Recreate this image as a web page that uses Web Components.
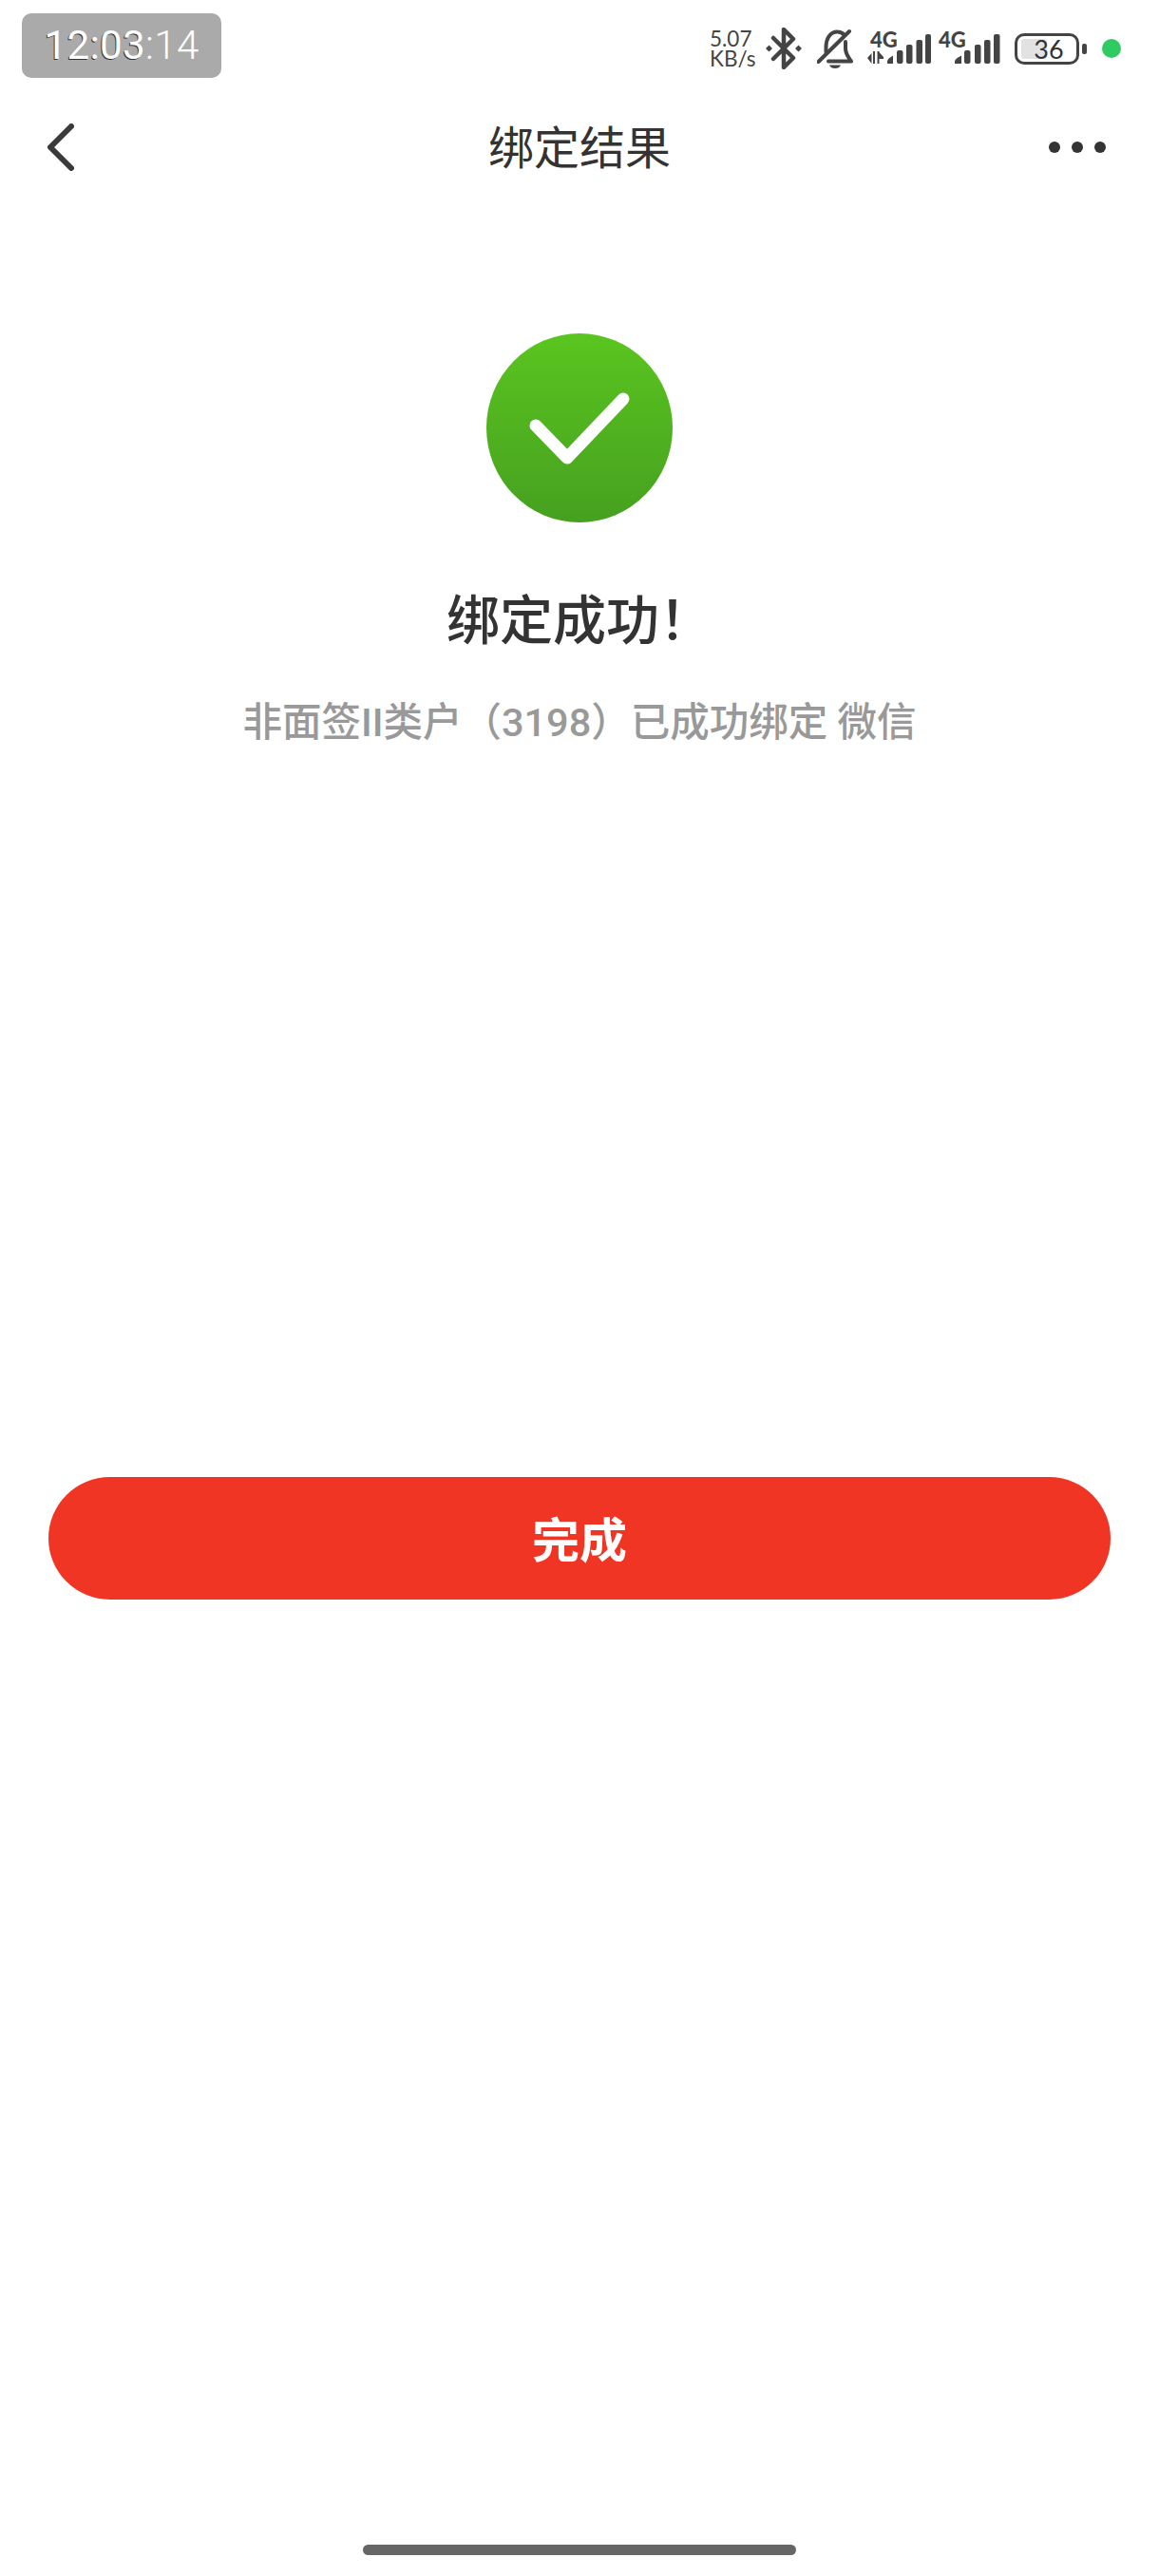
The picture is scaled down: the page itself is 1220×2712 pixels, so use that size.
<!DOCTYPE html>
<html lang="zh-CN">
<head>
<meta charset="utf-8">
<title>绑定结果</title>
<style>
html,body{margin:0;padding:0;background:#fff}
body{font-family:Roboto,"Noto Sans CJK SC",sans-serif}
app-page{display:flex;flex-direction:column;width:1220px;height:2712px}
</style>
</head>
<body>
<app-page>
  <status-bar></status-bar>
  <nav-bar>绑定结果</nav-bar>
  <result-panel heading="绑定成功！">非面签II类户（3198）已成功绑定 微信</result-panel>
  <primary-button>完成</primary-button>
  <home-bar></home-bar>
</app-page>

<script>
function make(name, html){
  customElements.define(name, class extends HTMLElement{
    constructor(){
      super();
      this.attachShadow({mode:'open'}).innerHTML = html;
    }
    connectedCallback(){
      const h=this.getAttribute('heading'), el=this.shadowRoot.querySelector('[data-heading]');
      if(h&&el) el.textContent=h;
    }
  });
}

make('status-bar', `
<style>
:host{display:flex;align-items:flex-start;justify-content:space-between;box-sizing:border-box;height:100px;padding:14px 40px 0 23px;color:#444;flex:none}
.clock{box-sizing:border-box;width:210px;height:68px;border-radius:10px;background:#aaa;color:#fff;display:flex;align-items:center;justify-content:center;
  font:300 42px/1 Roboto,sans-serif;letter-spacing:.4px}
.clock b{font-weight:400;text-shadow:-1px 1px 0 #333}
.icons{display:flex;align-items:center;height:44px;margin-top:15px}
.speed{font:400 22.500px/21px Lato,sans-serif;width:47px;margin-left:-2px;margin-right:12px;text-align:left;color:#444}
.speed span{display:block}
svg{display:block;flex:none}
.bt{margin-right:16px}
.bell{margin-right:15px}
.sig{position:relative;flex:none;width:67px;height:36px}
.sig span{position:absolute;top:-2px;font:900 22px/22px Lato,sans-serif;color:#444}
.batt{position:relative;box-sizing:border-box;width:68px;height:33px;border:3.5px solid #444;border-radius:10px;margin-left:15px;display:flex;align-items:center;justify-content:center;
  font:400 27px/1 Lato,sans-serif;color:#333}
.batt i{position:absolute;left:4px;top:3px;bottom:3px;width:27px;border-radius:3px;background:#e2e2e2}
.batt span{position:relative;left:2px}
.nub{width:5px;height:11px;border-radius:2px;background:#444;margin-left:3px}
.dot{width:20px;height:20px;border-radius:50%;background:#2fcb62;margin-left:16px}
</style>
<div class="clock"><span><b>12:03</b>:14</span></div>
<div class="icons">
  <div class="speed"><span>5.07</span><span>KB/s</span></div>
  <svg class="bt" width="38" height="44" viewBox="0 0 38 44"><path d="M8 11 L29 32 L19 42 V2 L29 12 L8 33" fill="none" stroke="#444" stroke-width="4.500" stroke-linejoin="round" stroke-linecap="round"/><path d="M3.500 18.500 L7 22 L3.500 25.500 L0 22Z M34.500 18.500 L38 22 L34.500 25.500 L31 22Z" fill="#444"/></svg>
  <svg class="bell" width="38" height="42" viewBox="0 0 38 42"><g fill="none" stroke="#444" stroke-width="4" stroke-linecap="round" stroke-linejoin="round"><path d="M1.500 35 L34 3"/><path d="M9.500 25 V20 C9.500 9 15 3 22 3.500 C25 3.600 27 5 28.500 6.500"/><path d="M30 14 V21 C30 27 33 30 36 34.500 H12"/></g><path d="M13 38.500 H25 C24 41 22 42 19 42 C16 42 14 41 13 38.500Z" fill="#444"/></svg>
  <div class="sig"><span style="left:3px">4G</span><svg width="67" height="36" viewBox="0 0 67 36">
    <path d="M0 28 L4.500 23 V34 Z M6 21 H8 V34 H6Z M10.500 21 H12.500 V34 H10.500Z M12.500 22 L17 27 V29 H12.500Z" fill="#444"/>
    <g fill="#444"><path d="M21 34 V31.500 Q21 29 27 25.500 V34Z"/><rect x="31" y="20" width="6.500" height="14" rx="2"/><rect x="41" y="14" width="6.500" height="20" rx="2"/><rect x="51.500" y="9" width="6.500" height="25" rx="2"/><rect x="61" y="3" width="6" height="31" rx="2"/></g></svg></div>
  <div class="sig" style="width:65px;margin-left:8px"><span style="left:0">4G</span><svg width="65" height="36" viewBox="0 0 65 36">
    <g fill="#444"><path d="M17 34 V31.500 Q17 29 24 25.500 V34Z"/><rect x="27" y="20" width="6.500" height="14" rx="2"/><rect x="38" y="14" width="6.500" height="20" rx="2"/><rect x="48" y="9" width="6.500" height="25" rx="2"/><rect x="58" y="3" width="6.500" height="31" rx="2"/></g></svg></div>
  <div class="batt"><i></i><span>36</span></div>
  <div class="nub"></div>
  <div class="dot"></div>
</div>`);

make('nav-bar', `
<style>
:host{display:grid;grid-template-columns:1fr auto 1fr;align-items:center;height:112px;padding:0 50px;flex:none;color:#333}
.t{font:400 48px/1 "Noto Sans CJK SC",sans-serif;margin-top:-9px}
.b{justify-self:start;display:block;margin-top:-2px}
.m{justify-self:end;display:flex;gap:12px;margin-right:6px;margin-top:-2px}
.m i{width:12px;height:12px;border-radius:50%;background:#333}
</style>
<svg class="b" width="28" height="50" viewBox="0 0 28 50"><path d="M25 3 L3 25 L25 47" fill="none" stroke="#3a3a3a" stroke-width="6" stroke-linecap="round" stroke-linejoin="round"/></svg>
<div class="t"><slot></slot></div>
<div class="m"><i></i><i></i><i></i></div>`);

make('result-panel', `
<style>
:host{display:flex;flex-direction:column;align-items:center;flex:none;padding-top:139px;height:1343px;box-sizing:border-box}
svg{display:block}
h1{margin:64px 0 0;font:500 56px/70px "Noto Sans CJK SC",sans-serif;color:#333}
p{margin:49px 0 0;font:500 41.500px/56px Roboto,"Noto Sans CJK SC",sans-serif;color:#999}
</style>
<svg width="196" height="199" viewBox="0 0 196 199">
  <defs><linearGradient id="g" x1="0" y1="0" x2="0" y2="1"><stop offset="0" stop-color="#5ac51f"/><stop offset="1" stop-color="#46a01f"/></linearGradient></defs>
  <ellipse cx="98" cy="99.500" rx="98" ry="99.500" fill="url(#g)"/>
  <path d="M52 97 L85 131 L144 69" fill="none" stroke="#fff" stroke-width="13" stroke-linecap="round" stroke-linejoin="round"/>
</svg>
<h1 data-heading></h1>
<p><slot></slot></p>`);

make('primary-button', `
<style>
:host{display:flex;align-items:center;justify-content:center;flex:none;box-sizing:border-box;height:129px;padding-bottom:3px;margin:0 51px;border-radius:65px;background:#f03524;color:#fff;font:700 50px/1 "Noto Sans CJK SC",sans-serif}
</style>
<slot></slot>`);

make('home-bar', `
<style>
:host{display:flex;justify-content:center;align-items:flex-end;flex:1;padding-bottom:22px}
i{display:block;width:456px;height:11px;border-radius:6px;background:#666}
</style>
<i></i>`);

make('app-page', `<style>:host{display:flex;flex-direction:column;width:1220px;height:2712px;background:#fff}</style><slot></slot>`);
</script>
</body>
</html>
